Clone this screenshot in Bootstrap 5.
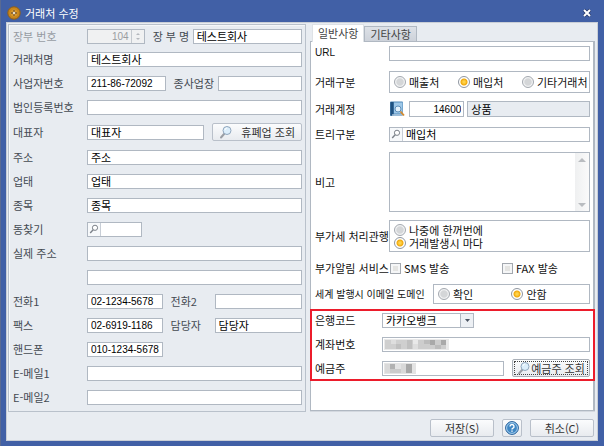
<!DOCTYPE html>
<html lang="ko">
<head>
<meta charset="utf-8">
<meta name="viewport" content="width=device-width, initial-scale=1">
<title>거래처 수정</title>
<link href="https://cdn.jsdelivr.net/npm/bootstrap@5.3.0/dist/css/bootstrap.min.css" rel="stylesheet">
<style>
  :root { --line: #b0b8c2; --face: #e8ecf1; --frame: #4160a6; }
  body { background: var(--frame); color: #111; font: 11px/16px "Noto Sans CJK KR", sans-serif; }
  .window { min-height: 100vh; padding: 0 6px 5px 5px; border-left: 1px solid #596a92; }
  .titlebar { height: 22px; padding: 3px 6px 0 1px; }
  .titlebar h1 { font-size: 11px; line-height: 16px; color: #fff; }
  .close-btn { line-height: 0; }
  .client { background: var(--face); border: 1px solid #c9ced6; padding: 1px 2px 0 1px; }
  .columns { display: grid; grid-template-columns: minmax(0, 298fr) minmax(0, 285fr); gap: 4px; }
  .pane { border: 1px solid #b9c1cb; box-shadow: inset 1px 1px #f5f7f9; padding: 0 3px 2px 4px; color: #444a52; }
  .line { display: flex; align-items: center; min-height: 24px; }
  .line:first-child { min-height: 22px; }
  .line.tall { min-height: 26px; }
  .line > .cap { flex: 0 0 74px; }
  .cap, .opt { white-space: nowrap; }
  .num { font-family: "Liberation Sans", sans-serif !important; font-size: 10px !important; }
  .side-by-side { display: grid; flex: 1; align-items: center; column-gap: 8px; }
  .g-book { grid-template-columns: 58fr 32px 110fr; }
  .g-biz { grid-template-columns: 79fr 36px 85fr; }
  .g-ceo { grid-template-columns: 118fr 90fr; }
  .g-tel { grid-template-columns: 76fr 36px 88fr; }
  .g-acct { grid-template-columns: 55fr 122fr; column-gap: 3px; }
  .g-owner { grid-template-columns: 122fr 78fr; }
  .form-control, .form-select, .boxed { min-width: 0; min-height: 0; height: 15px; padding: 0 2px 0 3px; border: 1px solid var(--line); border-radius: 0; background-color: #fff; color: #000; font: inherit; line-height: 13px; }
  .form-control:disabled { background: #f0f1f2; color: #9a9da1; }
  .boxed { display: flex; padding: 0; }
  .boxed .form-control { border: 0; height: 13px; }
  .g-acct .form-control { height: 16px; }
  .g-acct .form-control[readonly] { background: var(--face); }
  .short-field { flex: 0 0 19%; }
  .lens { flex: 0 0 13px; border: 0; border-right: 1px solid #c8ced6; background: #f7f9fb; padding: 0; line-height: 0; }
  .xbtn { display: flex; align-items: center; justify-content: center; height: 18px; padding: 0 3px; border: 1px solid #b9c0ca; border-radius: 2px; background: linear-gradient(#fbfcfd, #e8ebef); color: #333; font: inherit; line-height: 14px; white-space: nowrap; }
  .nav-tabs { border: 0; padding-left: 2px; height: 17px; align-items: flex-end; }
  .nav-tabs .nav-link { height: 15px; padding: 0 5px; border: 1px solid var(--line); border-bottom: 0; border-radius: 0; margin: 0; background: linear-gradient(#dde1e7, #cdd2da); color: #444; line-height: 14px; }
  .nav-tabs .nav-link.active { height: 18px; margin-bottom: -1px; background: #fff; color: #444; line-height: 15px; z-index: 1; }
  .sheet { flex: 1; display: grid; align-content: start; grid-template-columns: minmax(0, 1fr); grid-template-rows: 22px 36px 18px 32px 64px 44px 20px 31px auto; background: #fff; border: 1px solid var(--line); border-right-width: 2px; box-shadow: 0 1px #d3d8df; margin-bottom: 1px; }
  .right-line { display: flex; align-items: center; padding: 0 3px 0 4px; }
  .right-line > .cap { flex: 0 0 74px; }
  .right-line > .domain { flex: 0 0 118px; font-size: 10px; }
  .radios { display: grid; flex: 1; align-items: center; height: 22px; border: 1px solid var(--line); padding: 0 3px 0 4px; }
  .three { grid-template-columns: repeat(3, minmax(0, 64fr)); }
  .two { grid-template-columns: 73fr 74fr; height: 20px; }
  .stacked { height: 32px; align-content: center; line-height: 12px; row-gap: 1px; }
  .checks { display: grid; flex: 1; grid-template-columns: 112fr 88fr; padding-left: 1px; }
  .opt { display: flex; align-items: center; gap: 3px; }
  .form-check-input { flex: none; width: 12px; height: 12px; margin: 0; border: 1px solid #a3a8af; background: radial-gradient(#d4d6d8 0 45%, #f1f2f3 60%); box-shadow: none; }
  .form-check-input[type=radio]:checked { border-color: #8f96a0; background: radial-gradient(circle, #ffd34a 0 1px, #f0a80c 3px, #fff 4px); }
  .form-check-input[type=checkbox] { width: 11px; height: 11px; border-radius: 0; background: #e4e4e2; box-shadow: inset 0 0 0 2px #f5f6f7; }
  .memo { flex: 1; display: flex; height: 60px; border: 1px solid var(--line); }
  .memo .form-control { height: 100%; border: 0; resize: none; overflow: hidden; }
  .track { flex: 0 0 14px; background: linear-gradient(90deg, #eff0f1, #fafafa); padding: 5px 0 4px; display: flex; flex-direction: column; justify-content: space-between; align-items: center; }
  .bank { display: grid; grid-template-rows: 18px 30px 18px; border: 2px solid #ec1c2b; margin: 0 -2px 0 -1px; padding: 0 3px 2px; }
  .bank .line { min-height: 0; }
  .bank .line > .cap { flex: 0 0 67px; }
  .bank .form-select { width: 92px; background-image: none; padding-right: 16px; }
  .arrow-cell { position: absolute; right: 1px; top: 1px; width: 13px; height: 13px; border-left: 1px solid var(--line); background: #edf0f4; display: flex; align-items: center; justify-content: center; pointer-events: none; }
  .mosaic { position: absolute; left: 2px; top: 2px; }
  .dotted { padding: 0 2px; border-color: #aab0b8; outline: 1px dotted #444; outline-offset: -3px; }
  .footer-bar { padding: 7px 1px 3px; }
  .wide { flex: 0 0 64px; }
  .help { flex: 0 0 20px; padding: 0; }
</style>
<script src="https://cdn.jsdelivr.net/npm/bootstrap@5.3.0/dist/js/bootstrap.bundle.min.js"></script>
</head>
<body>
<svg class="d-none" aria-hidden="true">
  <symbol id="glass" viewBox="0 0 14 14"><path d="M5.500 8.500 2 12.500" stroke="#9a9ea5" stroke-width="2" stroke-linecap="round"/><circle cx="8" cy="5.500" r="4" fill="#dceefb" stroke="#8fa6bd"/><path d="M6 5a2 2 0 0 1 2-2" stroke="#fff" fill="none"/></symbol>
  <symbol id="lens" viewBox="0 0 10 10"><circle cx="6" cy="3.800" r="2.600" fill="#fff" stroke="#7c828a"/><path d="M4.200 5.800 1.200 9" stroke="#7c828a" stroke-width="1.400"/></symbol>
</svg>
<main class="window d-flex flex-column">
  <header class="titlebar d-flex align-items-center">
    <svg width="14" height="14" viewBox="0 0 14 14" class="me-1" aria-hidden="true"><circle cx="7" cy="7" r="6.200" fill="#c8861c" stroke="#8f5d16"/><circle cx="7" cy="7" r="3.500" fill="#d99a2c"/><path d="M7 4v6M4 7h6" stroke="#7c5a30" stroke-width="1.400"/><circle cx="7" cy="7" r="1.200" fill="#e8e2ce"/></svg>
    <h1 class="m-0 fw-normal flex-grow-1">거래처 수정</h1>
    <button type="button" class="close-btn border-0 bg-transparent p-0" aria-label="닫기"><svg width="10" height="10" viewBox="0 0 10 10"><path d="m2 2 6 6m0-6L2 8" stroke="#26396b" stroke-width="3.400"/><path d="m2 2 6 6m0-6L2 8" stroke="#fff" stroke-width="2"/></svg></button>
  </header>
  <form class="client flex-grow-1 d-flex flex-column">
    <div class="columns">
      <section class="pane">
        <div class="line"><label class="cap opacity-50" for="bookno">장부 번호</label>
          <div class="side-by-side g-book"><div class="boxed"><input id="bookno" class="form-control num text-end" value="104" disabled>
            <svg width="13" height="13" viewBox="0 0 13 13" class="flex-shrink-0" aria-hidden="true"><path fill="#f0f1f2" d="M0 0h13v13H0z"/><path d="M.5 0v13" stroke="#c4c9cf"/><path d="m5 5 2-2 2 2zM5 8l2 2 2-2z" fill="#b4b8bd"/></svg></div>
            <label class="cap" for="bookname">장 부 명</label><input id="bookname" class="form-control" value="테스트회사"></div></div>
        <div class="line"><label class="cap" for="cname">거래처명</label><input id="cname" class="form-control" value="테스트회사"></div>
        <div class="line"><label class="cap" for="bizno">사업자번호</label>
          <div class="side-by-side g-biz"><input id="bizno" class="form-control num" value="211-86-72092"><label class="cap" for="sub">종사업장</label><input id="sub" class="form-control"></div></div>
        <div class="line"><label class="cap" for="corp">법인등록번호</label><input id="corp" class="form-control"></div>
        <div class="line tall"><label class="cap" for="ceo">대표자</label>
          <div class="side-by-side g-ceo"><input id="ceo" class="form-control" value="대표자"><button type="button" class="xbtn"><svg width="14" height="14" class="me-2"><use href="#glass"/></svg>휴폐업 조회</button></div></div>
        <div class="line"><label class="cap" for="addr">주소</label><input id="addr" class="form-control" value="주소"></div>
        <div class="line"><label class="cap" for="type">업태</label><input id="type" class="form-control" value="업태"></div>
        <div class="line"><label class="cap" for="item">종목</label><input id="item" class="form-control" value="종목"></div>
        <div class="line"><label class="cap" for="dong">동찾기</label><div class="boxed short-field"><button type="button" class="lens" aria-label="찾기"><svg width="10" height="10"><use href="#lens"/></svg></button><input id="dong" class="form-control"></div></div>
        <div class="line"><label class="cap" for="real1">실제 주소</label><input id="real1" class="form-control"></div>
        <div class="line"><span class="cap"></span><input class="form-control" aria-label="실제 주소 상세"></div>
        <div class="line"><label class="cap" for="tel1">전화1</label>
          <div class="side-by-side g-tel"><input id="tel1" class="form-control num" value="02-1234-5678"><label class="cap" for="tel2">전화2</label><input id="tel2" class="form-control"></div></div>
        <div class="line"><label class="cap" for="fax">팩스</label>
          <div class="side-by-side g-tel"><input id="fax" class="form-control num" value="02-6919-1186"><label class="cap" for="mgr">담당자</label><input id="mgr" class="form-control" value="담당자"></div></div>
        <div class="line"><label class="cap" for="cell">핸드폰</label><div class="side-by-side g-tel"><input id="cell" class="form-control num" value="010-1234-5678"></div></div>
        <div class="line"><label class="cap" for="mail1">E-메일1</label><input id="mail1" class="form-control"></div>
        <div class="line"><label class="cap" for="mail2">E-메일2</label><input id="mail2" class="form-control"></div>
      </section>

      <section class="d-flex flex-column">
        <div class="nav nav-tabs" role="tablist"><button type="button" class="nav-link active" role="tab" aria-selected="true">일반사항</button><button type="button" class="nav-link" role="tab" aria-selected="false">기타사항</button></div>
        <div class="sheet">
          <div class="right-line"><label class="cap num" for="url">URL</label><input id="url" class="form-control"></div>
          <div class="right-line"><span class="cap" id="kind">거래구분</span>
            <div class="radios three" role="radiogroup" aria-labelledby="kind">
              <label class="opt"><input type="radio" name="kind" class="form-check-input">매출처</label>
              <label class="opt"><input type="radio" name="kind" class="form-check-input" checked>매입처</label>
              <label class="opt"><input type="radio" name="kind" class="form-check-input">기타거래처</label></div></div>
          <div class="right-line"><label class="cap" for="acct">거래계정</label>
            <button type="button" class="border-0 bg-transparent p-0 me-1 lh-1" aria-label="계정 찾기"><svg width="16" height="16" viewBox="0 0 16 16" class="d-block"><rect x="1" y=".5" width="13" height="14.500" rx="1" fill="#4f87b8"/><path d="M1.500 1h3v13.500h-3z" fill="#1f5180"/><path d="M5 1.500h8.500v11H5z" fill="#9ec8e8"/><path d="M3 14h11" stroke="#e8f1f8"/><circle cx="9" cy="8" r="3" fill="#e4f2fc" stroke="#5d8db8"/><path d="m11.500 10.500 3.500 4" stroke="#d58a2c" stroke-width="1.800"/></svg></button>
            <div class="side-by-side g-acct"><input id="acct" class="form-control num text-end" value="14600"><input class="form-control" value="상품" aria-label="계정명" readonly></div></div>
          <div class="right-line"><label class="cap" for="tree">트리구분</label><div class="boxed flex-grow-1"><button type="button" class="lens" aria-label="찾기"><svg width="10" height="10"><use href="#lens"/></svg></button><input id="tree" class="form-control" value="매입처"></div></div>
          <div class="right-line"><label class="cap" for="note">비고</label><div class="memo"><textarea id="note" class="form-control"></textarea><div class="track" aria-hidden="true"><svg width="8" height="4"><path d="M0 4h8L4 0z" fill="#b9bcc0"/></svg><svg width="8" height="4"><path d="M0 0h8L4 4z" fill="#b9bcc0"/></svg></div></div></div>
          <div class="right-line"><span class="cap" id="vat">부가세 처리관행</span>
            <div class="radios stacked" role="radiogroup" aria-labelledby="vat">
              <label class="opt"><input type="radio" name="vat" class="form-check-input">나중에 한꺼번에</label>
              <label class="opt"><input type="radio" name="vat" class="form-check-input" checked>거래발생시 마다</label></div></div>
          <div class="right-line"><span class="cap">부가알림 서비스</span><div class="checks"><label class="opt"><input type="checkbox" class="form-check-input">SMS 발송</label><label class="opt"><input type="checkbox" class="form-check-input">FAX 발송</label></div></div>
          <div class="right-line"><span class="cap domain" id="dom">세계 발행시 이메일 도메인</span>
            <div class="radios two" role="radiogroup" aria-labelledby="dom">
              <label class="opt"><input type="radio" name="dom" class="form-check-input">확인</label>
              <label class="opt"><input type="radio" name="dom" class="form-check-input" checked>안함</label></div></div>
          <div class="bank">
            <div class="line"><label class="cap" for="bankcode">은행코드</label><div class="position-relative"><select id="bankcode" class="form-select"><option>카카오뱅크</option></select><span class="arrow-cell"><svg width="5" height="3"><path d="M0 0h5L2.500 3z" fill="#4b5563"/></svg></span></div></div>
            <div class="line"><label class="cap" for="acno">계좌번호</label><div class="position-relative flex-grow-1"><input id="acno" class="form-control">
              <svg class="mosaic" width="65" height="11" shape-rendering="crispEdges" aria-hidden="true"><path fill="#e9e9e9" d="M0 0h65v11H0z"/><path fill="#cfcfcf" d="M1 1h28v9H1z"/><path fill="#dedede" d="M7 1h5v4H7zM29 5h6v5h-6z"/><path fill="#c0c0c0" d="M12 5h5v5h-5zM23 1h5v9h-5z"/><path fill="#cdcdcd" d="M34 1h28v9H34z"/><path fill="#a9a9a9" d="M46 1h5v5h-5zM57 1h5v5h-5z"/><path fill="#bcbcbc" d="M40 1h6v4h-6zM51 6h6v4h-6z"/></svg></div></div>
            <div class="line"><label class="cap" for="owner">예금주</label><div class="side-by-side g-owner"><div class="position-relative"><input id="owner" class="form-control">
              <svg class="mosaic" width="32" height="11" shape-rendering="crispEdges" aria-hidden="true"><path fill="#e4e4e4" d="M0 0h32v11H0z"/><path fill="#b2b2b2" d="M6 1h5v5H6z"/><path fill="#cbcbcb" d="M6 6h5v4H6zM11 6h6v4h-6z"/><path fill="#d9d9d9" d="M1 1h5v9H1zM17 1h5v9h-5z"/><path fill="#a8a8a8" d="M22 1h6v9h-6z"/></svg></div>
              <button type="button" class="xbtn dotted"><svg width="14" height="14" class="flex-shrink-0"><use href="#glass"/></svg>예금주 조회</button></div></div>
          </div>
        </div>
      </section>
    </div>
    <div class="footer-bar d-flex justify-content-end gap-2"><button type="button" class="xbtn wide">저장(S)</button><button type="button" class="xbtn help" aria-label="도움말"><svg width="14" height="14" viewBox="0 0 14 14"><circle cx="7" cy="7" r="6.400" fill="#3f87c4" stroke="#2a629c"/><circle cx="7" cy="7" r="5.400" fill="none" stroke="#a9d0ee"/><path d="M5 5.500a2 2 0 1 1 3 1.700q-1 .5-1 1.300M7 9.500v1.300" fill="none" stroke="#fff" stroke-width="1.400"/></svg></button><button type="button" class="xbtn wide">취소(C)</button></div>
  </form>
</main>
</body>
</html>
